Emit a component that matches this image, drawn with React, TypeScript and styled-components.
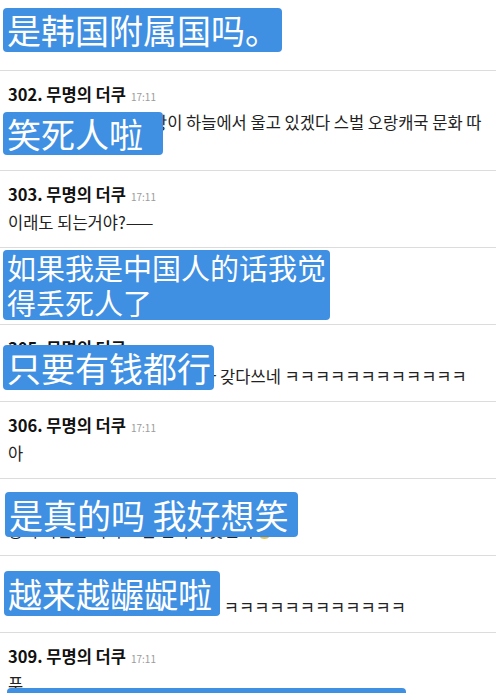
import React from 'react';
import styled, { createGlobalStyle } from 'styled-components';

const GlobalStyle = createGlobalStyle`
  html, body {
    margin: 0;
    background: #fff;
    font-family: "Noto Sans CJK KR", "Noto Sans", sans-serif;
  }
`;

const List = styled.div`
  width: 496px;
  overflow: hidden;
`;

const Row = styled.div<{ $height?: number }>`
  position: relative;
  box-sizing: border-box;
  padding: 13px 8px 13px 8px;
  border-bottom: 1px solid #dcdcdc;
  ${(p) => (p.$height ? `height: ${p.$height}px; padding: 0;` : '')}
`;

const Head = styled.div`
  display: flex;
  align-items: baseline;
  gap: 5px;
  height: 20px;
  line-height: 20px;
`;

const Name = styled.span`
  font-size: 16.5px;
  font-weight: 700;
  color: #111;
`;

const Time = styled.span`
  font-size: 10px;
  color: #9c9c9c;
`;

const Body = styled.div`
  margin-top: 7px;
  font-size: 16.5px;
  line-height: 23px;
  color: #222;
  word-break: break-all;
`;

const Emoji = styled.span`
  display: inline-block;
  width: 15px;
  height: 15px;
  margin-left: 3px;
  border-radius: 50%;
  background: #f2bf3c;
  vertical-align: -2px;
`;

const Caption = styled.div<{ $top: number; $left: number; $size: number; $lh: number; $width?: number }>`
  position: absolute;
  z-index: 1;
  top: ${(p) => p.$top}px;
  left: ${(p) => p.$left}px;
  ${(p) => (p.$width ? `width: ${p.$width}px;` : '')}
  box-sizing: border-box;
  padding: 0 3px 0 4px;
  background: #3f90e2;
  border-radius: 4px;
  color: #fff;
  font-family: "Noto Sans CJK SC", "Noto Sans", sans-serif;
  font-size: ${(p) => p.$size}px;
  line-height: ${(p) => p.$lh}px;
  white-space: nowrap;
`;

type Cap = { text: string[]; top: number; left: number; size: number; lh: number; width?: number };
type Item = { no?: number; body?: React.ReactNode; cap?: Cap; height?: number };

const items: Item[] = [
  { height: 71, cap: { text: ['是韩国附属国吗。'], top: 8, left: 3, size: 34, lh: 44 } },
  {
    no: 302,
    body: '이러면 세종대왕 고종황이 하늘에서 울고 있겠다 스벌 오랑캐국 문화 따라하네',
    cap: { text: ['笑死人啦'], top: 41, left: 3, size: 34, lh: 43, width: 160 },
  },
  { no: 303, body: '이래도 되는거야?——' },
  {
    no: 304,
    body: '중국인들이 보면 진짜 어이없겠다',
    cap: { text: ['如果我是中国人的话我觉', '得丢死人了'], top: 2, left: 3, size: 29, lh: 35, width: 327 },
  },
  {
    no: 305,
    body: '돈만 주면 아무데서나 아무거나 갖다쓰네 ㅋㅋㅋㅋㅋㅋㅋㅋㅋㅋㅋㅋ',
    cap: { text: ['只要有钱都行'], top: 20, left: 3, size: 34, lh: 45 },
  },
  { no: 306, body: '아' },
  {
    no: 307,
    body: (
      <>
        중국 사람들 이거 보면 얼마나 웃길까
        <Emoji />
      </>
    ),
    cap: { text: ['是真的吗 我好想笑'], top: 13, left: 5, size: 34, lh: 45, width: 293 },
  },
  {
    no: 308,
    body: '이건 또 어디서 베껴온 거냐고요 ㅋㅋㅋㅋㅋㅋㅋㅋㅋㅋㅋㅋ',
    cap: { text: ['越来越龌龊啦'], top: 15, left: 4, size: 34, lh: 45, width: 216 },
  },
  {
    no: 309,
    body: '푸',
    cap: { text: ['连中国的东西都要抢过去'], top: 55, left: 7, size: 34, lh: 45, width: 399 },
  },
];

function Comment({ item }: { item: Item }) {
  return (
    <Row $height={item.height}>
      {item.no && (
        <>
          <Head>
            <Name>{item.no}. 무명의 더쿠</Name>
            <Time>17:11</Time>
          </Head>
          <Body>{item.body}</Body>
        </>
      )}
      {item.cap && (
        <Caption $top={item.cap.top} $left={item.cap.left} $size={item.cap.size} $lh={item.cap.lh} $width={item.cap.width}>
          {item.cap.text.map((t, i) => (
            <div key={i}>{t}</div>
          ))}
        </Caption>
      )}
    </Row>
  );
}

export default function App() {
  return (
    <List>
      <GlobalStyle />
      {items.map((it, i) => (
        <Comment key={i} item={it} />
      ))}
    </List>
  );
}
